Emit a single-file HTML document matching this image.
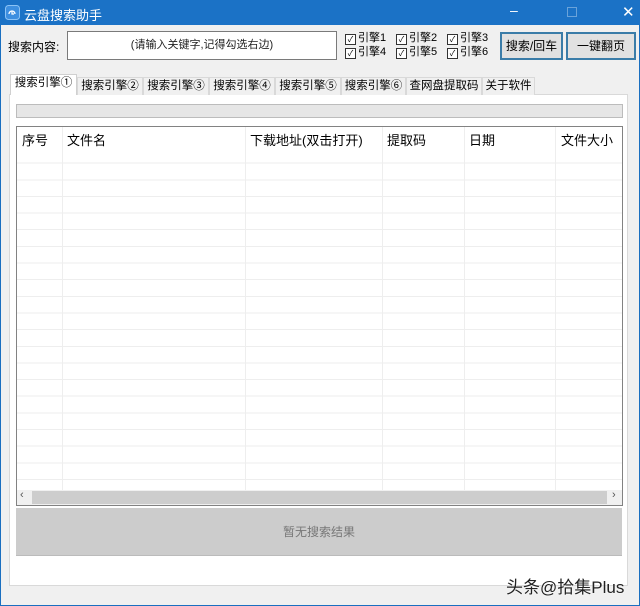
<!DOCTYPE html>
<html><head><meta charset="utf-8"><style>
*{margin:0;padding:0;box-sizing:border-box}
body{width:640px;height:606px;overflow:hidden;background:#f0f0f0;font-family:"Liberation Sans","Noto Sans CJK SC",sans-serif;font-size:12px;color:#000;position:relative}
.a{position:absolute}
#win{left:0;top:0;width:640px;height:606px;border:1px solid #1a6fc0}
#title{left:0;top:0;width:640px;height:25px;background:#1b72c6;color:#fff;font-size:13px}
.tab{position:absolute;top:77px;height:18px;border:1px solid #d9d9d9;border-bottom:none;background:#f0f0f0;font-size:11.5px;text-align:center;line-height:17px;white-space:nowrap;overflow:hidden}
.cb{position:absolute;font-size:11px;line-height:13px;white-space:nowrap}
.cb i{display:inline-block;width:11px;height:11px;border:1px solid #333;vertical-align:-1px;margin-right:2px;font-style:normal;font-size:8px;line-height:9px;text-align:center;background:#fff}
.btn{position:absolute;top:32px;height:28px;border:2px solid #3a7ca8;background:#e1e1e1;text-align:center;line-height:24px;font-size:12px}
.hd{position:absolute;top:130px;font-size:13px}
.vl{position:absolute;top:127px;width:1px;height:364px;background:#eeeeee}
</style></head><body>
<div class="a" id="win"></div>
<div class="a" id="title">
 <svg class="a" style="left:5px;top:5px" width="15" height="15" viewBox="0 0 15 15"><rect x="0.5" y="0.5" width="14" height="14" rx="3" fill="#3d8fe0" stroke="#8cc3f5"/><path d="M4 9a3 3 0 1 1 6 0" stroke="#fff" fill="none" stroke-width="1.3"/><path d="M7 6v3h2" stroke="#fff" fill="none" stroke-width="1.2"/></svg>
 <span class="a" style="left:24px;top:5px">云盘搜索助手</span>
 <span class="a" style="left:510px;top:2px;font-size:14px">&#8211;</span>
 <span class="a" style="left:567px;top:7px;width:10px;height:10px;border:1px solid #6aa3da"></span>
 <span class="a" style="left:622px;top:3px;font-size:15px">&#10005;</span>
</div>
<span class="a" style="left:8px;top:38px;font-size:12px">搜索内容:</span>
<div class="a" style="left:67px;top:31px;width:270px;height:29px;background:#fff;border:1px solid #7a7a7a;text-align:center;line-height:27px;font-size:11px;color:#222">(请输入关键字,记得勾选右边)</div>
<div class="cb" style="left:345px;top:32px"><i>&#10003;</i>引擎1</div>
<div class="cb" style="left:396px;top:32px"><i>&#10003;</i>引擎2</div>
<div class="cb" style="left:447px;top:32px"><i>&#10003;</i>引擎3</div>
<div class="cb" style="left:345px;top:46px"><i>&#10003;</i>引擎4</div>
<div class="cb" style="left:396px;top:46px"><i>&#10003;</i>引擎5</div>
<div class="cb" style="left:447px;top:46px"><i>&#10003;</i>引擎6</div>
<div class="btn" style="left:500px;width:63px">搜索/回车</div>
<div class="btn" style="left:566px;width:70px">一键翻页</div>
<div class="a" style="left:9px;top:94px;width:619px;height:492px;background:#fff;border:1px solid #d9d9d9"></div>
<div class="tab" style="left:10px;top:74px;height:21px;width:67px;background:#fff;border-color:#d0d0d0">搜索引擎①</div>
<div class="tab" style="left:77px;width:66px">搜索引擎②</div>
<div class="tab" style="left:143px;width:66px">搜索引擎③</div>
<div class="tab" style="left:209px;width:66px">搜索引擎④</div>
<div class="tab" style="left:275px;width:66px">搜索引擎⑤</div>
<div class="tab" style="left:341px;width:65px">搜索引擎⑥</div>
<div class="tab" style="left:406px;width:76px">查网盘提取码</div>
<div class="tab" style="left:482px;width:53px">关于软件</div>
<div class="a" style="left:16px;top:104px;width:607px;height:14px;background:#e6e6e6;border:1px solid #bcbcbc"></div>
<div class="a" style="left:16px;top:126px;width:607px;height:380px;border:1px solid #828282;background:#fff repeating-linear-gradient(to bottom,transparent 0,transparent 15.65px,#eeeeee 15.65px,#eeeeee 16.65px);background-position:0 20px;background-clip:padding-box"></div>
<div class="a" style="left:17px;top:127px;width:605px;height:21px;background:#fff"></div>
<div class="vl" style="left:62px"></div><div class="vl" style="left:245px"></div><div class="vl" style="left:382px"></div><div class="vl" style="left:464px"></div><div class="vl" style="left:555px"></div>
<div class="hd" style="left:22px">序号</div><div class="hd" style="left:67px">文件名</div><div class="hd" style="left:250px">下载地址(双击打开)</div><div class="hd" style="left:387px">提取码</div><div class="hd" style="left:469px">日期</div><div class="hd" style="left:561px">文件大小</div>
<div class="a" style="left:17px;top:490px;width:605px;height:15px;background:#f0f0f0"></div>
<div class="a" style="left:32px;top:491px;width:575px;height:13px;background:#cdcdcd"></div>
<span class="a" style="left:20px;top:489px;font-size:11px;color:#555">&lsaquo;</span>
<span class="a" style="left:612px;top:489px;font-size:11px;color:#555">&rsaquo;</span>
<div class="a" style="left:16px;top:508px;width:606px;height:48px;background:#cccccc;border-bottom:1px solid #bbb;text-align:center;line-height:48px;color:#777;font-size:12px">暂无搜索结果</div>
<span class="a" style="left:506px;top:573px;font-size:17px;color:#222;text-shadow:0 0 2px #fff">头条@拾集Plus</span>
</body></html>
